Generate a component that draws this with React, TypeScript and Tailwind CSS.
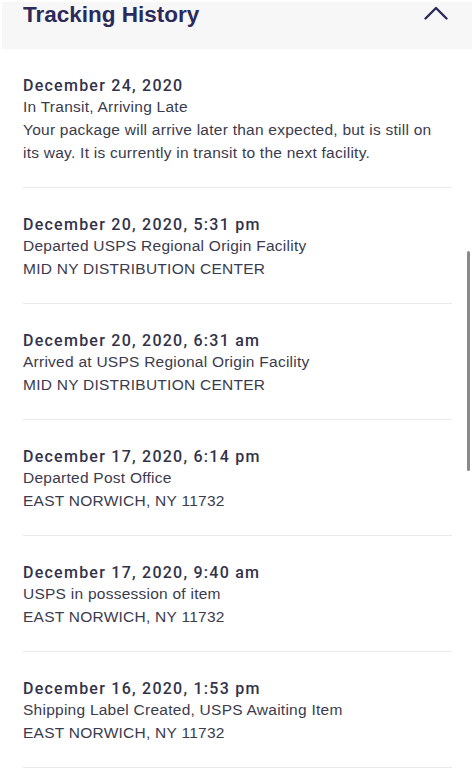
const events = [
  {
    date: 'December 24, 2020',
    lines: [
      'In Transit, Arriving Late',
      'Your package will arrive later than expected, but is still on its way. It is currently in transit to the next facility.',
    ],
  },
  {
    date: 'December 20, 2020, 5:31 pm',
    lines: ['Departed USPS Regional Origin Facility', 'MID NY DISTRIBUTION CENTER'],
  },
  {
    date: 'December 20, 2020, 6:31 am',
    lines: ['Arrived at USPS Regional Origin Facility', 'MID NY DISTRIBUTION CENTER'],
  },
  {
    date: 'December 17, 2020, 6:14 pm',
    lines: ['Departed Post Office', 'EAST NORWICH, NY 11732'],
  },
  {
    date: 'December 17, 2020, 9:40 am',
    lines: ['USPS in possession of item', 'EAST NORWICH, NY 11732'],
  },
  {
    date: 'December 16, 2020, 1:53 pm',
    lines: ['Shipping Label Created, USPS Awaiting Item', 'EAST NORWICH, NY 11732'],
  },
];

export default function App() {
  return (
    <div className="relative w-[474px] h-[782px] overflow-hidden bg-white font-['Liberation_Sans',Arial,sans-serif]">
      <div className="ml-[2px] w-[470px] h-[49px] bg-[#f7f7f8] border-t-2 border-white flex items-start justify-between pl-[21px] pr-[24px]">
        <h2 className="text-[22.5px] leading-[23px] font-bold text-[#2b2a5a] pt-[1px]">Tracking History</h2>
        <svg width="24" height="14" viewBox="0 0 24 14" className="mt-[4px]" fill="none">
          <polyline points="1.5,12.5 12,2 22.5,12.5" stroke="#2b2a5a" strokeWidth="2.4" strokeLinecap="round" strokeLinejoin="round" />
        </svg>
      </div>

      <div className="px-[23px] pr-[22px]">
        {events.map((e) => (
          <div key={e.date} className="py-[23px] border-b border-[#ebebee]">
            <p className="font-['Roboto',Arial,sans-serif] text-[16px] leading-[19px] pt-[4px] font-medium tracking-[1.25px] text-[#32324a]">
              {e.date}
            </p>
            {e.lines.map((l) => (
              <p key={l} className="max-w-[422px] text-[15.5px] leading-[23px] tracking-[0.25px] text-[#3b3b4e]">
                {l}
              </p>
            ))}
          </div>
        ))}
      </div>

      <div className="absolute left-[467px] top-[251px] w-[3px] h-[220px] rounded-full bg-[#8a8a8a]" />
    </div>
  );
}
